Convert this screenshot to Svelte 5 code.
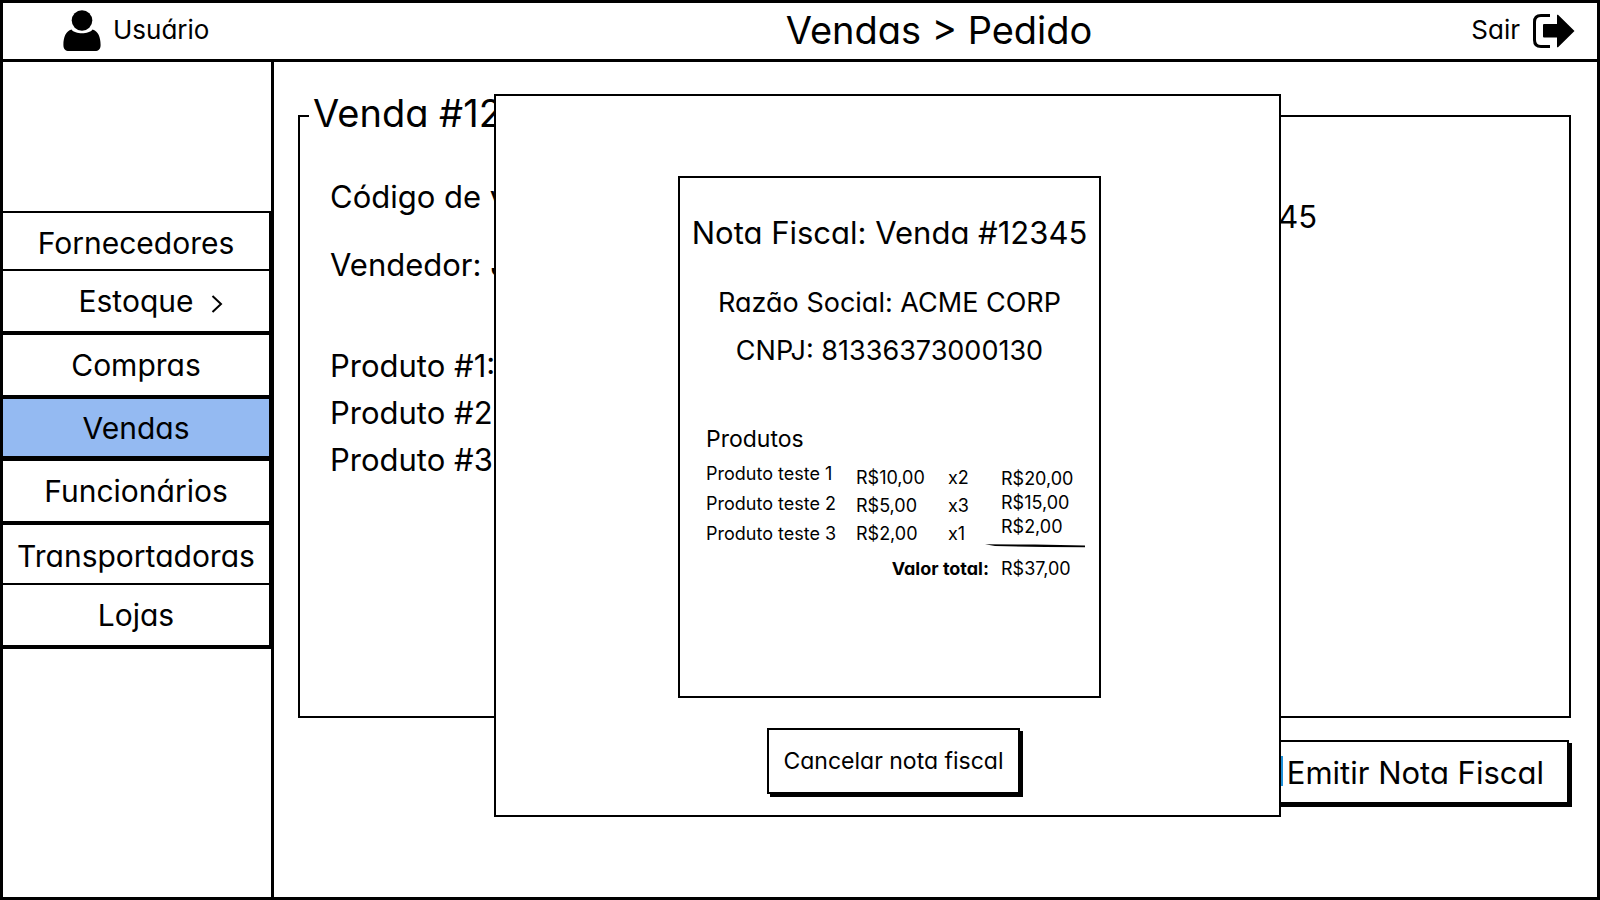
<script>
  const menu = [
    { label: 'Fornecedores' },
    { label: 'Estoque', submenu: true, thick: true },
    { label: 'Compras', thick: true },
    { label: 'Vendas', active: true },
    { label: 'Funcionários', thick: true },
    { label: 'Transportadoras' },
    { label: 'Lojas', thick: true }
  ];

  const items = [
    { name: 'Produto teste 1', price: 'R$10,00', qty: 'x2', total: 'R$20,00' },
    { name: 'Produto teste 2', price: 'R$5,00', qty: 'x3', total: 'R$15,00' },
    { name: 'Produto teste 3', price: 'R$2,00', qty: 'x1', total: 'R$2,00' }
  ];
</script>

<div class="page">
  <header>
    <a class="user" href="#usuario">
      <svg width="40" height="42" viewBox="0 0 40 42" aria-hidden="true">
        <circle cx="20" cy="10.5" r="10.3" />
        <path d="M9.5 19.5C13 24.6 27 24.6 30.5 19.5C36 21 38.6 27 38.6 35C38.6 39 36.500 41 33 41H7C3.500 41 1.400 39 1.400 35C1.400 27 4 21 9.500 19.500Z" />
      </svg>
      <span>Usuário</span>
    </a>
    <h1>Vendas &gt; Pedido</h1>
    <a class="exit" href="#sair">
      <span>Sair</span>
      <svg width="42" height="34" viewBox="0 0 42 34" aria-hidden="true">
        <path d="M17 1.500H8Q1.500 1.500 1.500 8V26Q1.500 32.500 8 32.500H17" fill="none" stroke="#000" stroke-width="3" />
        <path d="M11 10H24V1Q24 .4 25 .8L41.500 17L25 33.200Q24 33.600 24 33V23.500H11Q10 23.500 10 22.500V11Q10 10 11 10Z" />
      </svg>
    </a>
  </header>

  <div class="body">
    <nav>
      {#each menu as item}
        <button type="button" class:thick={item.thick} class:active={item.active}>
          <span>{item.label}
            {#if item.submenu}
              <svg class="chevron" width="12" height="18" viewBox="0 0 12 18" aria-hidden="true">
                <path d="M1.500 1L10 9L1.500 17" fill="none" stroke="#000" stroke-width="2" />
              </svg>
            {/if}
          </span>
        </button>
      {/each}
    </nav>

    <main>
      <fieldset>
        <legend>Venda #12</legend>
        <div class="columns">
          <div>
            <p class="field">Código de v</p>
            <p class="field">Vendedor: J</p>
            <ul>
              <li>Produto #1:</li>
              <li>Produto #2</li>
              <li>Produto #3</li>
            </ul>
          </div>
          <p class="number">45</p>
        </div>
      </fieldset>
      <button type="button" class="boxed emit">Emitir Nota Fiscal</button>

      <div class="dialog" role="dialog" aria-labelledby="invoice-title">
        <article>
          <h2 id="invoice-title">Nota Fiscal: Venda #12345</h2>
          <p class="company">Razão Social: ACME CORP</p>
          <p class="company">CNPJ: 81336373000130</p>
          <h3>Produtos</h3>
          <table>
            <tbody>
              {#each items as item, i}
                <tr style="--row: {i}">
                  <td class="name">{item.name}</td>
                  <td class="price">{item.price}</td>
                  <td class="qty">{item.qty}</td>
                  <td class="total">{item.total}</td>
                </tr>
              {/each}
            </tbody>
            <tfoot>
              <tr>
                <td class="rule">
                  <svg width="100" height="4" viewBox="0 0 100 4" aria-hidden="true">
                    <path d="M0 .2L50 .5L100 1.600V3.300L60 3L10 2Z" />
                  </svg>
                </td>
              </tr>
              <tr>
                <th scope="row">Valor total:</th>
                <td class="sum">R$37,00</td>
              </tr>
            </tfoot>
          </table>
        </article>
        <button type="button" class="boxed cancel">Cancelar nota fiscal</button>
      </div>
    </main>
  </div>
</div>

<style>
  :global(body) {
    margin: 0;
    background: #fff;
  }

  .page {
    box-sizing: border-box;
    min-height: 100vh;
    display: flex;
    flex-direction: column;
    border: 3px solid #000;
    font-family: Inter, "Open Sans", sans-serif;
    font-feature-settings: "cv11";
    color: #000;
  }

  h1, h2, h3, p, ul {
    margin: 0;
    padding: 0;
    font-weight: 400;
  }

  ul {
    list-style: none;
  }

  button {
    font: inherit;
    font-feature-settings: inherit;
    color: inherit;
    background: #fff;
    cursor: pointer;
  }

  svg {
    display: block;
  }

  header {
    display: grid;
    grid-template-columns: 1fr auto 1fr;
    align-items: center;
    height: 56px;
    padding: 0 22px 0 59px;
    border-bottom: 3px solid #000;
    font-size: 26px;
  }

  header a {
    display: flex;
    align-items: center;
    color: inherit;
    text-decoration: none;
  }

  header span {
    padding-bottom: 3px;
  }

  .user {
    gap: 11px;
  }

  .exit {
    justify-self: end;
    gap: 13px;
  }

  h1 {
    padding: 0 0 2px 241px;
    font-size: 38px;
    line-height: 44px;
  }

  .body {
    flex: 1;
    display: flex;
  }

  nav {
    box-sizing: border-box;
    width: 271px;
    flex: none;
    padding-top: 149px;
    border-right: 3px solid #000;
  }

  nav button {
    display: block;
    box-sizing: border-box;
    width: 271px;
    height: 60px;
    padding: 3px 0 0;
    border: 0 solid #000;
    border-right-width: 5px;
    border-bottom-width: 2px;
    font-size: 30px;
  }

  nav button:first-child {
    border-top-width: 2px;
  }

  nav .thick {
    height: 64px;
    padding-top: 0;
    border-bottom-width: 4px;
  }

  nav .active {
    height: 62px;
    padding-top: 0;
    border-bottom-width: 5px;
    background: #94baf2;
  }

  nav span {
    position: relative;
  }

  .chevron {
    position: absolute;
    left: calc(100% + 18px);
    top: 12px;
  }

  main {
    position: relative;
    flex: 1;
    display: flex;
    flex-direction: column;
    gap: 22px;
    padding: 31px 26px 93px 24px;
  }

  fieldset {
    flex: 1;
    min-width: 0;
    margin: 0;
    padding: 0 252px 0 30px;
    border: 2px solid #000;
  }

  legend {
    margin-left: -21px;
    padding: 0 6px 6px 4px;
    font-size: 38px;
    line-height: 40px;
  }

  .columns {
    display: flex;
    justify-content: space-between;
    padding-top: 24px;
    font-size: 31px;
    line-height: 46px;
  }

  .field {
    padding: 11px 0;
  }

  .columns ul {
    padding-top: 43px;
    line-height: 47px;
  }

  .number {
    padding-top: 31px;
  }

  .boxed {
    box-sizing: border-box;
    border: 2px solid #000;
    box-shadow: 3px 3px 0 #000;
  }

  .emit {
    position: relative;
    align-self: flex-end;
    margin-right: 2px;
    height: 64px;
    padding: 0 23px;
    font-size: 31px;
  }

  .emit::before {
    content: "";
    position: absolute;
    top: 14px;
    right: 284px;
    width: 4px;
    height: 30px;
    background: #1e90d8;
  }

  .dialog {
    position: absolute;
    top: 32px;
    left: 220px;
    right: 316px;
    display: flex;
    flex-direction: column;
    align-items: center;
    gap: 30px;
    padding: 80px 0 21px;
    border: 2px solid #000;
    background: #fff;
  }

  article {
    box-sizing: border-box;
    width: 423px;
    min-height: 522px;
    margin-left: 4px;
    padding: 35px 14px 0 26px;
    border: 2px solid #000;
  }

  h2 {
    margin: 0 -14px 26px -26px;
    font-size: 31px;
    line-height: 40px;
    text-align: center;
    white-space: nowrap;
  }

  .company {
    margin: 0 -14px 0 -26px;
    font-size: 27px;
    line-height: 48px;
    text-align: center;
    white-space: nowrap;
  }

  h3 {
    margin-top: 49px;
    font-size: 23px;
    line-height: 30px;
  }

  table {
    display: grid;
    grid-template-columns: 150px 92px 53px 1fr;
    grid-auto-rows: 1px;
    padding-top: 10px;
    font-size: 18px;
    line-height: 20px;
    white-space: nowrap;
  }

  tbody, tfoot, tr {
    display: contents;
  }

  td, th {
    padding: 0;
    grid-row: calc(var(--row) * var(--step) + var(--lead)) / span 20;
  }

  .name {
    --step: 30;
    --lead: 1;
    grid-column: 1;
  }

  .price, .qty {
    --step: 28;
    --lead: 5;
  }

  .price {
    grid-column: 2;
  }

  .qty {
    grid-column: 3;
  }

  .total {
    --step: 24;
    --lead: 6;
    grid-column: 4;
  }

  .rule {
    grid-row: 81 / span 4;
    grid-column: 4;
    margin-left: -16px;
  }

  th {
    grid-row: 96 / span 20;
    grid-column: 1 / 4;
    padding-right: 12px;
    text-align: right;
    font-weight: 700;
  }

  .sum {
    grid-row: 96 / span 20;
    grid-column: 4;
  }

  .cancel {
    height: 66px;
    margin-left: 12px;
    padding: 0 14px;
    font-size: 23px;
  }
</style>
